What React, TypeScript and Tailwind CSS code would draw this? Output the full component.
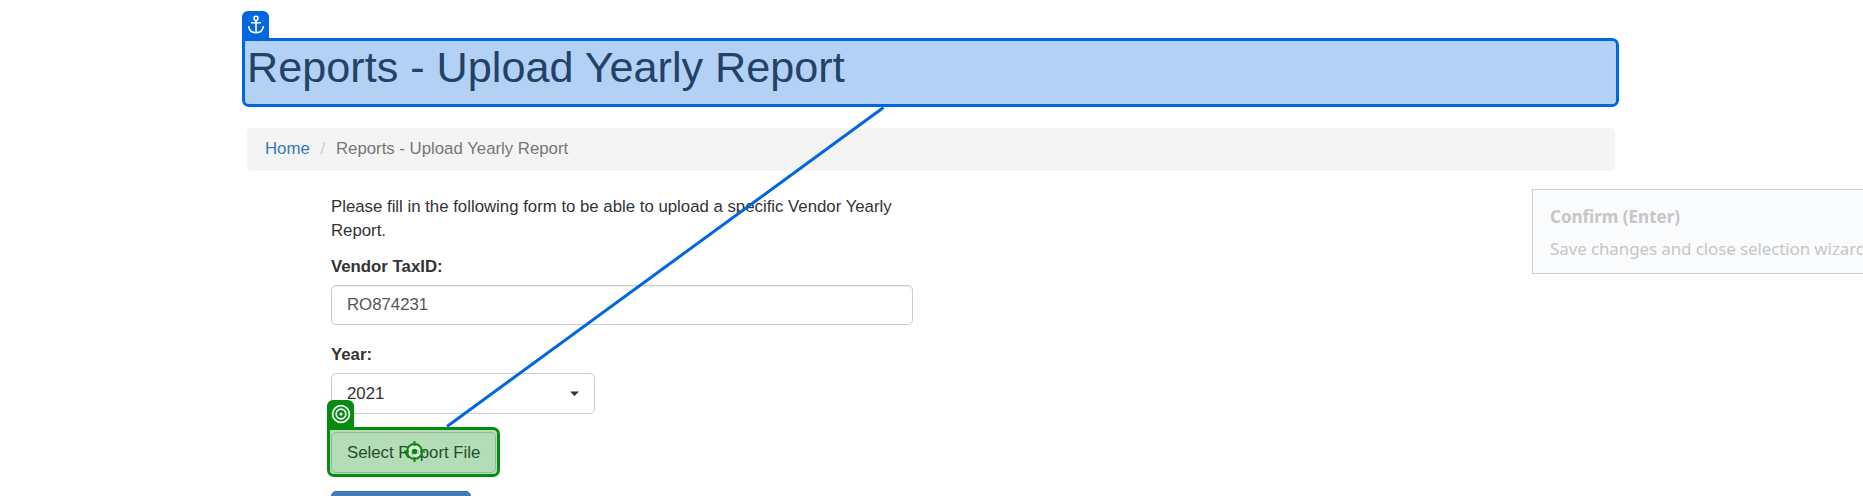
import React from "react";

function AnchorIcon() {
  return (
    <svg width="18" height="20" viewBox="0 0 18 20" fill="none" stroke="white" strokeWidth="1.6">
      <circle cx="9" cy="3.300" r="2" />
      <path d="M9 5.300V18M4 7.800H14M1.600 11.200C2 15.400 4.800 17.700 9 17.700S16 15.400 16.400 11.200" />
    </svg>
  );
}

function TargetIcon() {
  return (
    <svg width="20" height="20" viewBox="0 0 20 20" fill="none" stroke="white" strokeWidth="1.700">
      <circle cx="10" cy="10" r="8.400" />
      <circle cx="10" cy="10" r="4.800" />
      <circle cx="10" cy="10" r="1.500" fill="white" stroke="none" />
    </svg>
  );
}

function Crosshair() {
  return (
    <svg className="absolute left-[74px] top-[11px]" width="21" height="21" viewBox="0 0 21 21" fill="none" stroke="#058c0f" strokeWidth="2">
      <circle cx="10.500" cy="10.500" r="7.500" fill="#ffffff" fillOpacity="0.65" />
      <path d="M10.500 0V5M10.500 16V21M0 10.500H5M16 10.500H21" />
      <circle cx="10.500" cy="10.500" r="2.700" fill="#058c0f" stroke="none" />
    </svg>
  );
}

export default function App() {
  return (
    <div className="relative h-[496px] w-full overflow-hidden bg-white font-['Liberation_Sans',Arial,sans-serif] text-[16.8px] leading-6 text-[#333]">
      <main className="ml-[247px] w-[1368px] pt-[43px]">
        <div className="relative">
          <h1 className="h-[61px] whitespace-nowrap pt-px text-[43.2px] leading-[47.5px]">Reports - Upload Yearly Report</h1>
          <div className="absolute -left-[5px] -top-[5px] h-[69px] w-[1377px] rounded-[7px] rounded-tl-none border-[3px] border-[#0067df] bg-[#0067df]/30 bg-clip-padding" />
          <div className="absolute -left-[5px] -top-[32px] flex h-[27px] w-[27px] items-center justify-center rounded-t-[6px] bg-[#0067df]">
            <AnchorIcon />
          </div>
        </div>
        <nav className="mt-6 flex h-[43px] items-center rounded-[5px] bg-[#f4f4f4] px-[18px] pb-[2px]">
          <a className="text-[#337ab7]">Home</a>
          <span className="px-[10.75px] text-[#ccc]">/</span>
          <span className="text-[#777]">Reports - Upload Yearly Report</span>
        </nav>
        <form className="ml-[84px] mt-6 flex w-[582px] flex-col items-start">
          <p>Please fill in the following form to be able to upload a specific Vendor Yearly Report.</p>
          <label className="mt-3 font-bold">Vendor TaxID:</label>
          <div className="mt-[6px] flex h-10 w-full items-center rounded-[5px] border border-[#ccc] px-[15px] text-[#555] shadow-[inset_0_1px_1px_rgba(0,0,0,0.075)]">RO874231</div>
          <label className="mt-[18px] font-bold">Year:</label>
          <div className="mt-[6px] flex h-[41px] w-[264px] items-center justify-between rounded-[5px] border border-[#ccc] px-[15px]">
            <span>2021</span>
            <svg width="9" height="5" viewBox="0 0 9 5" fill="#333"><path d="M0 0.500H9L4.500 5Z" /></svg>
          </div>
          <div className="relative mt-[18px]">
            <div className="flex h-[41px] w-[165px] items-center whitespace-nowrap rounded-[5px] border border-[#ccc] px-[15px]">Select Report File</div>
            <div className="absolute -left-[4px] -top-[5px] h-[50px] w-[173px] rounded-[7px] rounded-tl-none border-[3px] border-[#058c0f] bg-[#058c0f]/30 bg-clip-padding">
              <Crosshair />
            </div>
            <div className="absolute -left-[4px] -top-[32px] flex h-[27px] w-[27px] items-center justify-center rounded-t-[6px] bg-[#058c0f]">
              <TargetIcon />
            </div>
          </div>
          <div className="mt-[18px] h-[41px] w-[140px] rounded-[5px] border border-[#3a70a8] bg-[#427cb8]" />
        </form>
      </main>
      <svg className="pointer-events-none absolute left-0 top-0" width="1863" height="496">
        <path d="M883.500 107.500L447 426.500" stroke="#0067df" strokeWidth="3" />
      </svg>
      <aside className="absolute left-[1532px] top-[189px] h-[85px] w-[360px] border border-[#ccc] bg-[#fafbfd] pl-[17px] pt-[11px] font-['Noto_Sans','Open_Sans',sans-serif] text-[17px] text-[#c6c6c6]">
        <div className="h-8 whitespace-nowrap font-bold leading-8">Confirm (Enter)</div>
        <div className="h-8 whitespace-nowrap tracking-[-0.12px] leading-8">Save changes and close selection wizard</div>
      </aside>
    </div>
  );
}
